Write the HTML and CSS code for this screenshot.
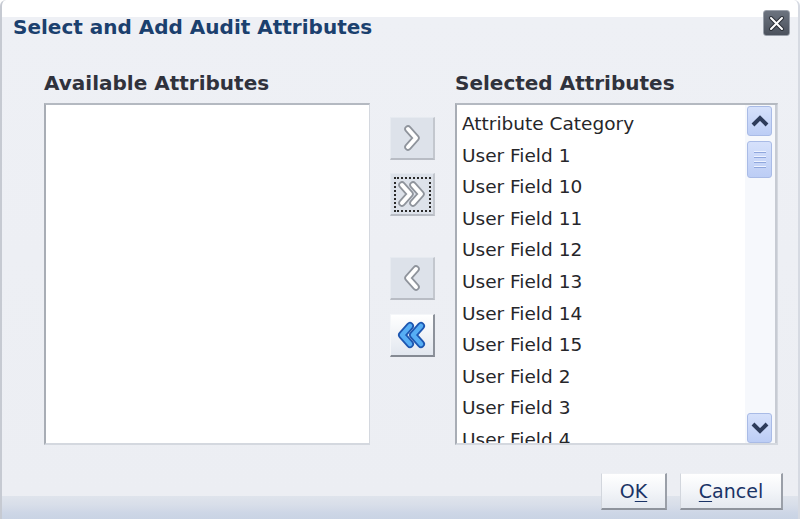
FILE: index.html
```html
<!DOCTYPE html>
<html>
<head>
<meta charset="utf-8">
<link rel="stylesheet" href="styles.css">
</head>
<body>
<div class="dialog">
  <div class="titlebar">
    <div class="title">Select and Add Audit Attributes</div>
    <div class="close">
      <svg width="17" height="17" viewBox="0 0 17 17">
        <path d="M3 3 L14 14 M14 3 L3 14" stroke="#2c3038" stroke-width="4" stroke-linecap="round"/>
        <path d="M3 3 L14 14 M14 3 L3 14" stroke="#ffffff" stroke-width="2" stroke-linecap="round"/>
      </svg>
    </div>
  </div>
  <div class="main">
    <div class="col col-left">
      <div class="heading">Available Attributes</div>
      <div class="listbox"></div>
    </div>
    <div class="col col-mid">
      <div class="shuttle disabled b1">
        <svg width="22" height="28" viewBox="0 0 22 28">
          <path d="M7 5 L15 14 L7 23" fill="none" stroke="#8f949c" stroke-width="7.5" stroke-linecap="round" stroke-linejoin="round"/>
          <path d="M7 5 L15 14 L7 23" fill="none" stroke="#ffffff" stroke-width="4" stroke-linecap="round" stroke-linejoin="round"/>
        </svg>
      </div>
      <div class="shuttle disabled focus b2">
        <svg width="32" height="28" viewBox="0 0 32 28">
          <path d="M6 5 L14 14 L6 23" fill="none" stroke="#8f949c" stroke-width="7.5" stroke-linecap="round" stroke-linejoin="round"/>
          <path d="M6 5 L14 14 L6 23" fill="none" stroke="#ffffff" stroke-width="4" stroke-linecap="round" stroke-linejoin="round"/>
          <path d="M17 5 L25 14 L17 23" fill="none" stroke="#8f949c" stroke-width="7.5" stroke-linecap="round" stroke-linejoin="round"/>
          <path d="M17 5 L25 14 L17 23" fill="none" stroke="#ffffff" stroke-width="4" stroke-linecap="round" stroke-linejoin="round"/>
        </svg>
      </div>
      <div class="shuttle disabled b3">
        <svg width="22" height="28" viewBox="0 0 22 28">
          <path d="M15 5 L7 14 L15 23" fill="none" stroke="#8f949c" stroke-width="7.5" stroke-linecap="round" stroke-linejoin="round"/>
          <path d="M15 5 L7 14 L15 23" fill="none" stroke="#ffffff" stroke-width="4" stroke-linecap="round" stroke-linejoin="round"/>
        </svg>
      </div>
      <div class="shuttle enabled b4">
        <svg width="32" height="28" viewBox="0 0 32 28">
          <path d="M14 5 L6 14 L14 23" fill="none" stroke="#1d56b0" stroke-width="8" stroke-linecap="round" stroke-linejoin="round"/>
          <path d="M25 5 L17 14 L25 23" fill="none" stroke="#1d56b0" stroke-width="8" stroke-linecap="round" stroke-linejoin="round"/>
          <path d="M14 5 L6 14 L14 23" fill="none" stroke="#56aef5" stroke-width="4.5" stroke-linecap="round" stroke-linejoin="round"/>
          <path d="M25 5 L17 14 L25 23" fill="none" stroke="#56aef5" stroke-width="4.5" stroke-linecap="round" stroke-linejoin="round"/>
        </svg>
      </div>
    </div>
    <div class="col col-right">
      <div class="heading">Selected Attributes</div>
      <div class="listbox selected">
        <div class="items">
          <div class="item">Attribute Category</div>
          <div class="item">User Field 1</div>
          <div class="item">User Field 10</div>
          <div class="item">User Field 11</div>
          <div class="item">User Field 12</div>
          <div class="item">User Field 13</div>
          <div class="item">User Field 14</div>
          <div class="item">User Field 15</div>
          <div class="item">User Field 2</div>
          <div class="item">User Field 3</div>
          <div class="item">User Field 4</div>
        </div>
        <div class="scrollbar">
          <div class="sb-btn">
            <svg width="20" height="12" viewBox="0 0 20 12">
              <path d="M3 10 L10 3 L17 10" fill="none" stroke="#2d3b5a" stroke-width="4" stroke-linejoin="miter"/>
            </svg>
          </div>
          <div class="sb-thumb">
            <span></span><span></span><span></span><span></span>
          </div>
          <div class="sb-track"></div>
          <div class="sb-btn">
            <svg width="20" height="12" viewBox="0 0 20 12">
              <path d="M3 2 L10 9 L17 2" fill="none" stroke="#2d3b5a" stroke-width="4" stroke-linejoin="miter"/>
            </svg>
          </div>
        </div>
      </div>
    </div>
  </div>
  <div class="footer">
    <div class="btn btn-ok">O<u>K</u></div>
    <div class="btn btn-cancel"><u>C</u>ancel</div>
  </div>
</div>
</body>
</html>
```

FILE: styles.css
```css
html, body {
  margin: 0;
  padding: 0;
  background: #ffffff;
}
body {
  width: 800px;
  height: 519px;
  overflow: hidden;
  font-family: "DejaVu Sans", "Liberation Sans", sans-serif;
}
.dialog {
  width: 800px;
  height: 519px;
  box-sizing: border-box;
  border-left: 2px solid #c6cad2;
  border-right: 2px solid #d6dae2;
  border-top-left-radius: 6px;
  border-top-right-radius: 6px;
  display: flex;
  flex-direction: column;
  background: linear-gradient(to bottom,
    #ffffff 0px, #ffffff 17px,
    #eef0f5 17px, #eceef3 496px,
    #dfe4ec 496px, #d8dee9 505px, #cdd6e6 513px, #c9d3e4 519px);
}
.titlebar {
  height: 71px;
  box-sizing: border-box;
  display: flex;
  justify-content: space-between;
  align-items: flex-start;
  padding: 10px 8px 0 11px;
}
.title {
  margin-top: 5px;
  font-size: 20px;
  line-height: 24px;
  font-weight: bold;
  color: #1b406e;
}
.close {
  width: 27px;
  height: 26px;
  box-sizing: border-box;
  border: 1px solid #9aa0aa;
  border-radius: 3px;
  background: linear-gradient(to bottom, #6c737f, #4c525d);
  display: flex;
  align-items: center;
  justify-content: center;
}
.main {
  display: flex;
  gap: 20px;
  padding-left: 42px;
  height: 374px;
}
.col-left { width: 326px; }
.col-mid {
  width: 45px;
  display: flex;
  flex-direction: column;
}
.col-right { width: 323px; }
.heading {
  font-size: 20px;
  line-height: 24px;
  font-weight: bold;
  color: #30323c;
  margin-bottom: 8px;
}
.listbox {
  height: 342px;
  box-sizing: border-box;
  background: #ffffff;
  border-top: 2px solid #b4b9c1;
  border-left: 2px solid #a8adb5;
  border-right: 1px solid #d4d8df;
  border-bottom: 2px solid #d4d8df;
}
.listbox.selected {
  display: flex;
  overflow: hidden;
}
.items {
  flex: 1;
  padding-top: 3px;
  padding-left: 5px;
  overflow: hidden;
}
.item {
  font-size: 18.5px;
  line-height: 31.6px;
  height: 31.6px;
  color: #26262a;
  white-space: nowrap;
}
.scrollbar {
  width: 32px;
  box-sizing: border-box;
  padding: 1px 3px 0 2px;
  display: flex;
  flex-direction: column;
  background: #f6f8fc;
  border-right: 2px solid #c7cbd3;
}
.sb-btn, .sb-thumb {
  box-sizing: border-box;
  border: 1px solid #a9bbe6;
  border-radius: 3px;
  background: linear-gradient(to bottom, #d6e1fb, #bccdf5);
  display: flex;
  align-items: center;
  justify-content: center;
}
.sb-btn { height: 30px; }
.sb-thumb {
  margin-top: 5px;
  height: 37px;
  flex-direction: column;
  gap: 3px;
}
.sb-thumb span {
  display: block;
  width: 12px;
  height: 1px;
  background: #eef3ff;
  border-bottom: 1px solid #8fa6dc;
}
.sb-track { flex: 1; }
.shuttle {
  width: 45px;
  height: 43px;
  box-sizing: border-box;
  display: flex;
  align-items: center;
  justify-content: center;
}
.shuttle.disabled {
  background: #dde2ea;
  border-top: 1px solid #e6eaf0;
  border-left: 1px solid #e6eaf0;
  border-right: 2px solid #c3c7ce;
  border-bottom: 2px solid #b8bcc4;
}
.shuttle.enabled {
  background: linear-gradient(to bottom, #ffffff, #e2e7ef);
  border-top: 1px solid #f4f6f9;
  border-left: 1px solid #f4f6f9;
  border-right: 2px solid #8d929b;
  border-bottom: 2px solid #858a93;
}
.shuttle.focus {
  outline: 2px dotted #2a2a2a;
  outline-offset: -6px;
}
.b1 { margin-top: 46px; }
.b2 { margin-top: 13px; }
.b3 { margin-top: 41px; }
.b4 { margin-top: 14px; }
.footer {
  display: flex;
  justify-content: flex-end;
  gap: 13px;
  padding-right: 15px;
  margin-top: 28px;
}
.btn {
  height: 37px;
  box-sizing: border-box;
  display: flex;
  align-items: center;
  justify-content: center;
  font-size: 19px;
  color: #1a3366;
  background: linear-gradient(to bottom, #ffffff 0%, #f4f6f9 45%, #e4e8ef 100%);
  border-top: 1px solid #eef0f4;
  border-left: 1px solid #d2d6dd;
  border-right: 2px solid #9a9fa8;
  border-bottom: 2px solid #8e939c;
}
.btn u { text-underline-offset: 3px; }
.btn-ok { width: 66px; }
.btn-cancel { width: 103px; }
```
